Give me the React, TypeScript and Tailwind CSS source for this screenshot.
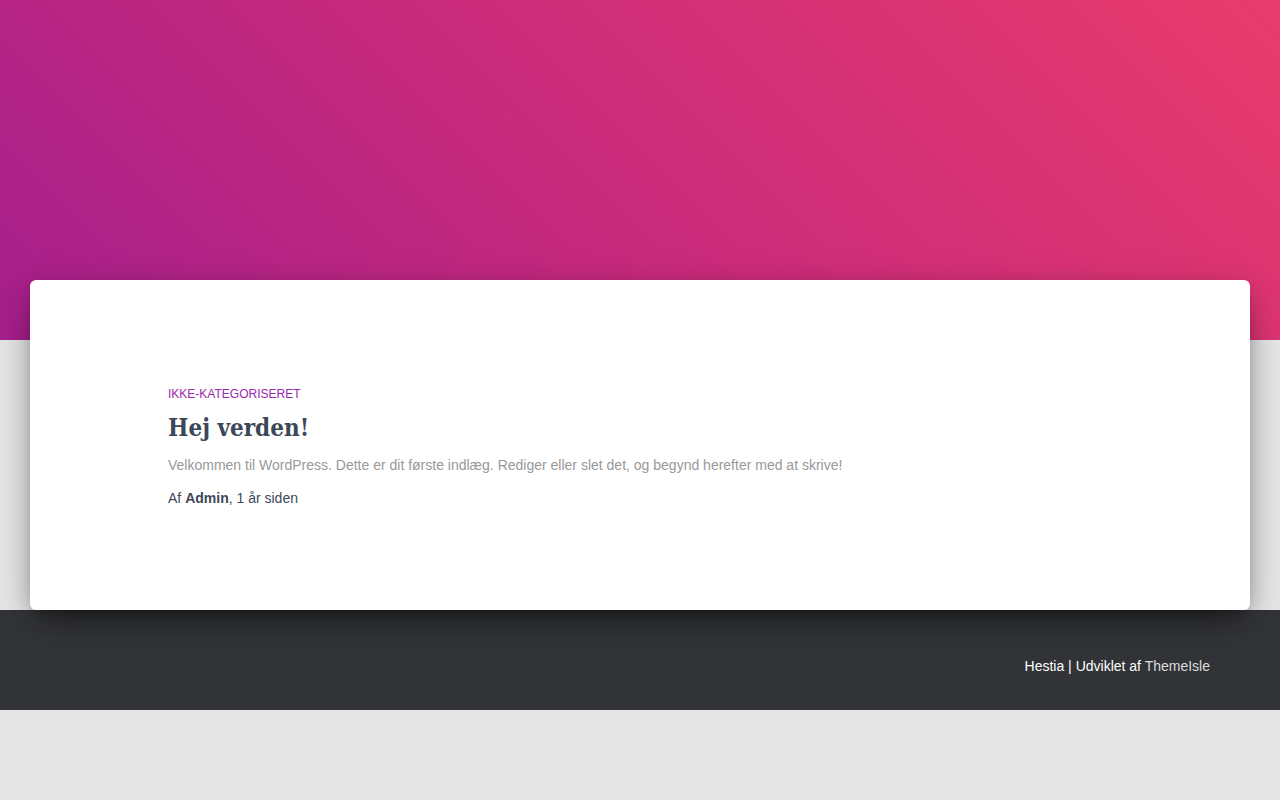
import React from 'react';

export default function App() {
  return (
    <div className="min-h-[800px] bg-[#e5e5e5] font-['Liberation_Sans',Arial,sans-serif]">
      {/* Header */}
      <div className="h-[340px] bg-[linear-gradient(45deg,#a51f8c_0%,#c82a7c_45%,#e93b6c_100%)]" />

      {/* Main card */}
      <div className="relative z-10 -mt-[60px] mx-[30px] h-[330px] rounded-md bg-white shadow-[0_16px_38px_-12px_rgba(0,0,0,0.56),0_4px_25px_0_rgba(0,0,0,0.12),0_8px_10px_-5px_rgba(0,0,0,0.2)]">
        <div className="px-[138px] pt-[107px]">
          <div className="text-[12px] leading-[14px] uppercase text-[#9c27b0]">Ikke-kategoriseret</div>
          <h2 className="mt-[11px] text-[24px] leading-[32px] font-bold text-[#3c4858] font-['DejaVu_Serif_Condensed','DejaVu_Serif',serif] [font-stretch:condensed]">
            Hej verden!
          </h2>
          <p className="mt-[11px] text-[14px] leading-[20px] text-[#999999]">
            Velkommen til WordPress. Dette er dit første indlæg. Rediger eller slet det, og begynd herefter med at skrive!
          </p>
          <div className="mt-[13px] text-[14px] leading-[20px] text-[#3c4858]">
            Af <b>Admin</b>, 1 år siden
          </div>
        </div>
      </div>

      {/* Footer */}
      <footer className="h-[100px] bg-[#323437] flex items-center justify-end pr-[70px] pt-[12px]">
        <div className="text-[14px] text-white">
          Hestia | Udviklet af <span className="text-[#dddddd]">ThemeIsle</span>
        </div>
      </footer>
    </div>
  );
}
